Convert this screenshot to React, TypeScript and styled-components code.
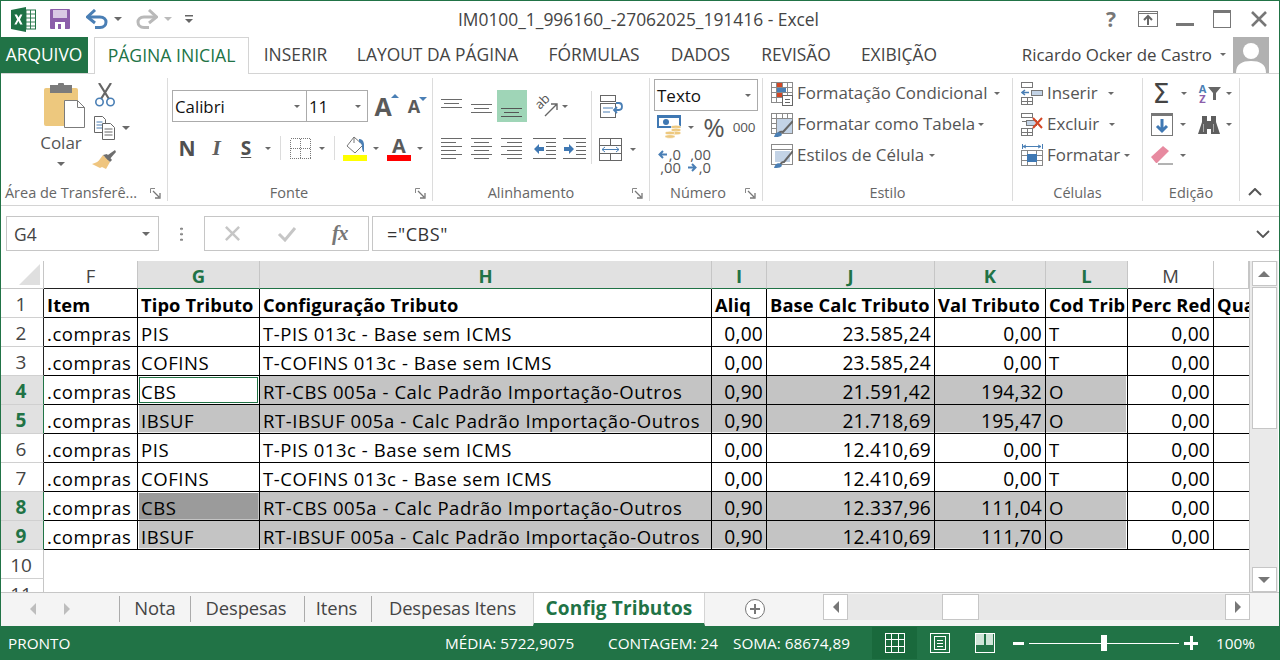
import React from "react";
import styled, { createGlobalStyle } from "styled-components";

const GREEN = "#217346";
const UI = '"Open Sans", "Noto Sans", sans-serif';

const Global = createGlobalStyle`
  html, body { margin: 0; padding: 0; background: #fff; }
  body { font-family: ${UI}; }
  * { box-sizing: border-box; }
`;

const Window = styled.div`
  width: 1280px; height: 660px; overflow: hidden; background: #fff;
  border: 1px solid ${GREEN}; border-bottom: 0;
  display: flex; flex-direction: column;
`;

const Caret = styled.span<{ $w?: number; $c?: string }>`
  display: inline-block; flex: none; width: 0; height: 0;
  border-left: ${p => (p.$w ?? 8) / 2}px solid transparent;
  border-right: ${p => (p.$w ?? 8) / 2}px solid transparent;
  border-top: ${p => (p.$w ?? 8) / 2}px solid ${p => p.$c ?? "#6a6a6a"};
`;

const Tool = styled.span<{ $w: number; $ml?: number; $h?: number; $bg?: string }>`
  display: inline-flex; align-items: center; justify-content: center; flex: none;
  width: ${p => p.$w}px; margin-left: ${p => p.$ml ?? 0}px;
  height: ${p => (p.$h ? `${p.$h}px` : "100%")};
  background: ${p => p.$bg ?? "transparent"};
`;

/* Title bar */
const TitleBar = styled.div`
  height: 36px; flex: none; display: flex; align-items: center; color: #444;
`;
const TitleText = styled.div`
  position: absolute; left: 0; width: 1275px; text-align: center; font-size: 17.4px; color: #444;
`;
const TitleWrap = styled.div`position: relative; display: flex; align-items: center; height: 36px; width: 1278px;`;

/* Tabs */
const TabsBar = styled.div`
  height: 37px; flex: none; display: flex; border-bottom: 1px solid #d4d4d4; position: relative;
`;
const FileTab = styled.div`
  width: 88px; height: 36px; margin-left: -1px; background: ${GREEN}; color: #fff; font-size: 17.4px; padding-bottom: 2px;
  display: flex; align-items: center; justify-content: center;
`;
const HomeTab = styled.div`
  width: 155px; height: 37px; margin-left: 6px; background: #fff; color: ${GREEN}; font-size: 17.6px; padding-bottom: 2px;
  border: 1px solid #d4d4d4; border-bottom: 0; display: flex; align-items: center; justify-content: center;
`;
const Tab = styled.div<{ $w: number }>`
  width: ${p => p.$w}px; height: 36px; color: #444; font-size: 17.4px; flex: none; padding-bottom: 2px;
  display: flex; align-items: center; justify-content: center;
`;
const UserName = styled.div`
  margin-left: auto; display: flex; align-items: center; height: 36px; font-size: 16.9px; color: #444; padding-bottom: 2px;
`;
const Avatar = styled.div`
  width: 36px; height: 36px; margin: 2px 10px 0 0; background: #b1b1b1; overflow: hidden; flex: none;
`;

/* Ribbon */
const Ribbon = styled.div`
  height: 132px; flex: none; display: flex; border-bottom: 1px solid #d4d4d4; padding-top: 4px;
`;
const Group = styled.div<{ $w: number }>`
  width: ${p => p.$w}px; height: 123px; flex: none; display: flex; flex-direction: column;
  border-right: 1px solid #dcdcdc;
`;
const GroupBody = styled.div<{ $pt?: number; $pl?: number }>`
  flex: 1; min-height: 0; padding-top: ${p => p.$pt ?? 0}px; padding-left: ${p => p.$pl ?? 0}px;
  display: flex; flex-direction: column;
`;
const GroupFoot = styled.div<{ $pr?: number }>`
  height: 26px; flex: none; display: flex; align-items: center; justify-content: center; position: relative;
  font-size: 14.5px; color: #666; padding-top: 8px; padding-right: ${p => p.$pr ?? 0}px; white-space: nowrap;
`;
const Launcher = styled.span`
  position: absolute; right: 6px; top: 13px; width: 11px; height: 11px; display: flex;
`;
const TRow = styled.div<{ $h: number; $mt?: number }>`
  display: flex; align-items: center; flex: none; height: ${p => p.$h}px; margin-top: ${p => p.$mt ?? 0}px;
`;
const Sep = styled.span<{ $ml?: number }>`
  width: 1px; height: 24px; background: #dcdcdc; flex: none; margin-left: ${p => p.$ml ?? 0}px;
`;

const Clip = styled.div`display: flex; height: 100%; padding-top: 5px;`;
const PasteCol = styled.div`
  width: 91px; padding-left: 43px; display: flex; flex-direction: column; align-items: flex-start;
`;
const PasteLabel = styled.div`
  width: 42px; margin-left: -4px; text-align: center; font-size: 17px; color: #555; line-height: 22px; margin-top: 3px;
`;
const PasteCaret = styled.div`width: 42px; margin-left: -4px; display: flex; justify-content: center; margin-top: 8px;`;
const ClipTools = styled.div`display: flex; flex-direction: column; gap: 0;`;

const Select = styled.div<{ $w: number; $ml?: number; $fs?: number }>`
  width: ${p => p.$w}px; height: 32px; margin-left: ${p => p.$ml ?? 0}px; flex: none;
  border: 1px solid #ababab; background: #fff; display: flex; align-items: center; justify-content: space-between;
  padding: 0 6px 0 2px; color: #111; font-size: ${p => p.$fs ?? 16.8}px;
`;
const GlyphN = styled.span`font: 700 21px "Open Sans", sans-serif; color: #505050;`;
const GlyphI = styled.span`font: italic 700 22px "Liberation Serif", serif; color: #606060;`;
const GlyphS = styled.span`font: 700 19px "Open Sans", sans-serif; color: #505050; text-decoration: underline; text-underline-offset: 2px;`;
const GrowA = styled.span<{ $fs: number; $tip: string; $down?: boolean }>`
  position: relative; font: 700 ${p => p.$fs}px "Open Sans", sans-serif; color: #5a5a5a; line-height: 1;
  &::after {
    content: ""; position: absolute; right: -7px; top: 0; width: 0; height: 0;
    border-left: 4px solid transparent; border-right: 4px solid transparent;
    ${p => (p.$down ? `border-top: 4px solid ${p.$tip};` : `border-bottom: 4px solid ${p.$tip};`)}
  }
`;
const ColorA = styled.span`
  display: flex; flex-direction: column; align-items: center; width: 24px; font: 700 20px/19px "Open Sans", sans-serif; color: #5a5a5a;
  &::after { content: ""; width: 24px; height: 6px; background: #ff0000; margin-top: 0; }
`;
const Thousands = styled.span`font-size: 13.5px; color: #555; letter-spacing: -.3px;`;
const Percent = styled.span`font-size: 26px; color: #555; line-height: 1;`;
const AlignWrap = styled.div`display: flex; height: 100%;`;
const AlignLeft = styled.div`width: 158px; padding-left: 4px; padding-top: 12px;`;
const VSep = styled.div`width: 1px; height: 73px; background: #dcdcdc; margin-top: 13px; flex: none;`;
const AlignRight = styled.div`padding-top: 12px; flex: 1;`;

const Action = styled.div<{ $mt?: number }>`
  display: flex; align-items: center; height: 31px; font-size: 16.9px; color: #555; white-space: nowrap;
  margin-top: ${p => p.$mt ?? 0}px; line-height: 1; padding-bottom: 0;
`;
const ActionText = styled.span``;
const ActionIcon = styled.span`width: 22px; height: 24px; margin-right: 4px; display: flex; flex: none;`;
const ActionCaret = styled.span<{ $ml: number }>`margin-left: ${p => p.$ml}px; display: flex;`;

const Collapse = styled.div`flex: 1; display: flex; align-items: flex-end; justify-content: center; padding: 0 10px 9px 0;`;

/* formula bar */
const FormulaBar = styled.div`height: 55px; flex: none; display: flex; align-items: flex-start; padding: 10px 0 0 5px; background: #fff;`;
const NameBox = styled.div`
  width: 155px; height: 35px; border: 1px solid #c6c6c6; display: flex; align-items: center; justify-content: space-between;
  padding: 0 8px 0 7px; font-size: 17.4px; color: #444;
`;
const Grip = styled.div`
  width: 3px; height: 15px; margin: 10px 21px 0 21px; flex: none;
  background-image: radial-gradient(circle, #8a8a8a 1.3px, transparent 1.4px); background-size: 3px 5.5px;
`;
const FxBox = styled.div`
  width: 165px; height: 35px; border: 1px solid #c6c6c6; display: flex; align-items: center; flex: none;
`;
const FxLabel = styled.span`
  font: italic 700 21px "Liberation Serif", serif; color: #777; margin-left: 35px; letter-spacing: -1px;
`;
const FormulaInput = styled.div`
  width: 907px; height: 35px; margin-left: 3px; border: 1px solid #c6c6c6; border-right: 0; display: flex; align-items: center; justify-content: space-between;
  padding: 0 9px 0 14px; font-size: 18px; color: #333; letter-spacing: .6px; flex: none;
`;

/* sheet */
const SheetArea = styled.div`height: 332px; flex: none; display: flex; border-bottom: 1px solid #c6c6c6;`;
const Grid = styled.div`
  width: 1248px; height: 331px; overflow: hidden; display: grid; flex: none; align-content: start;
  grid-template-columns: 43px 94px 122px 452px 55px 168px 111px 82px 86px 35px;
  grid-template-rows: 28px repeat(11, 29px);
  font-family: "Open Sans", sans-serif;
`;
const Corner = styled.div`
  background: #fff; border-bottom: 1px solid #c6c6c6; border-right: 1px solid #c6c6c6; position: relative;
  &::after {
    content: ""; position: absolute; right: 3px; bottom: 3px; width: 0; height: 0;
    border-left: 21px solid transparent; border-bottom: 21px solid #dfdfdf;
  }
`;
const ColHead = styled.div<{ $sel?: boolean; $line?: boolean }>`
  display: flex; align-items: center; justify-content: center; padding-top: 3px; line-height: 1;
  background: ${p => (p.$sel ? "#e1e1e1" : "#fff")};
  border-right: 1px solid #c6c6c6;
  border-bottom: 1px solid ${p => (p.$sel ? GREEN : p.$line ? "#222" : "#c6c6c6")};
  color: ${p => (p.$sel ? GREEN : "#444")}; font-weight: ${p => (p.$sel ? 700 : 400)}; font-size: 18.5px;
`;
const RowHead = styled.div<{ $sel?: boolean; $plain?: boolean }>`
  display: flex; align-items: center; justify-content: center; padding: 2px 2px 0 0;
  background: ${p => (p.$sel ? "#e1e1e1" : "#fff")};
  border-bottom: 1px solid #d0d0d0;
  border-right: 1px solid ${p => (p.$sel ? GREEN : p.$plain ? "#c6c6c6" : "#222")};
  color: ${p => (p.$sel ? GREEN : "#444")}; font-weight: ${p => (p.$sel ? 700 : 400)}; font-size: 19px;
`;
type Tone = "none" | "sel" | "dark" | "active";
const shade = (t: Tone) => (t === "sel" ? "#c4c4c4" : t === "dark" ? "#9b9b9b" : "#fff");
const Cell = styled.div<{ $tone: Tone; $right?: boolean; $bold?: boolean; $inset?: string; $open?: boolean }>`
  display: flex; align-items: center; overflow: hidden; white-space: nowrap;
  justify-content: ${p => (p.$right ? "flex-end" : "flex-start")};
  padding: 2px ${p => (p.$right ? 3 : 0)}px 0 ${p => (p.$right ? 0 : 3)}px;
  background: ${p => shade(p.$tone)};
  border-bottom: 1px solid #000; border-right: ${p => (p.$open ? "0" : "1px solid #000")};
  color: #000;
  font-size: ${p => (p.$bold ? 18.3 : p.$right ? 19.2 : 18.5)}px;
  letter-spacing: ${p => (p.$bold ? 0.12 : p.$right ? 0.2 : 0.55)}px;
  font-weight: ${p => (p.$bold ? 700 : 400)};
  box-shadow: ${p => p.$inset ?? "none"};
`;
const Empty = styled.div`grid-column: 2 / -1; background: #fff;`;

const VScroll = styled.div`
  width: 29px; flex: none; margin-left: 0; border-left: 1px solid #c6c6c6; background: #eaeaea; display: flex; flex-direction: column; align-items: center; padding: 0 0 0 0; height: 331px;
`;
const VBtn = styled.div`
  width: 25px; height: 25px; background: #fff; border: 1px solid #c6c6c6; display: flex; align-items: center; justify-content: center; flex: none;
`;
const VThumb = styled.div`width: 25px; height: 142px; margin-top: 1px; background: #fff; border: 1px solid #c6c6c6; flex: none;`;
const UpTri = styled.span`width: 0; height: 0; border-left: 6px solid transparent; border-right: 6px solid transparent; border-bottom: 6px solid #777;`;
const DownTri = styled.span`width: 0; height: 0; border-left: 6px solid transparent; border-right: 6px solid transparent; border-top: 6px solid #777;`;
const LeftTri = styled.span<{ $c?: string }>`width: 0; height: 0; border-top: 6px solid transparent; border-bottom: 6px solid transparent; border-right: 6px solid ${p => p.$c ?? "#777"};`;
const RightTri = styled.span<{ $c?: string }>`width: 0; height: 0; border-top: 6px solid transparent; border-bottom: 6px solid transparent; border-left: 6px solid ${p => p.$c ?? "#777"};`;

/* Sheet tabs */
const TabStrip = styled.div`height: 33px; flex: none; display: flex; background: #f4f4f4;`;
const StripNav = styled.div`width: 118px; display: flex; align-items: center; padding-left: 29px; gap: 28px; flex: none; padding-bottom: 2px;`;
const SheetTab = styled.div<{ $w: number; $pr?: number }>`
  width: ${p => p.$w}px; height: 26px; margin-top: 3px; flex: none; display: flex; align-items: center; justify-content: center;
  border-left: 1px solid #ababab; font-size: 18.4px; color: #444; padding: 0 ${p => p.$pr ?? 0}px 3px 0; letter-spacing: -.1px;
`;
const ActiveTab = styled.div`
  width: 172px; height: 33px; flex: none; background: #fff; display: flex; align-items: center; justify-content: center;
  border-bottom: 3px solid ${GREEN}; border-left: 1px solid #d4d4d4; border-right: 1px solid #d4d4d4;
  font-size: 19px; font-weight: 700; color: ${GREEN}; letter-spacing: .15px;
`;
const AddSheet = styled.div`
  width: 20px; height: 20px; margin: 6px 0 0 40px; border: 1px solid #777; border-radius: 50%; flex: none; position: relative; background: #fff;
  &::before { content: ""; position: absolute; left: 4px; right: 4px; top: 8px; height: 2px; background: #777; }
  &::after { content: ""; position: absolute; top: 4px; bottom: 4px; left: 8px; width: 2px; background: #777; }
`;
const HScroll = styled.div`
  width: 427px; height: 26px; margin: 1px 0 0 58px; flex: none; background: #e8e8e8; display: flex; align-items: stretch;
`;
const HBtn = styled.div`width: 25px; background: #fff; border: 1px solid #c6c6c6; display: flex; align-items: center; justify-content: center; flex: none;`;
const HThumb = styled.div`width: 37px; margin-left: 94px; background: #fff; border: 1px solid #c6c6c6; flex: none;`;
const HFill = styled.div`flex: 1;`;

/* Status */
const StatusBar = styled.div`
  height: 34px; flex: none; margin: 0 -1px; background: ${GREEN}; display: flex; align-items: center; color: #fff; font-size: 15.3px;
`;
const StatusItem = styled.span<{ $left: number; $w: number }>`
  margin-left: ${p => p.$left}px; width: ${p => p.$w}px; flex: none; white-space: nowrap;
`;
const ViewBtn = styled.div<{ $on?: boolean; $ml?: number }>`
  width: 45px; height: 32px; margin-left: ${p => p.$ml ?? 0}px; flex: none; display: flex; align-items: center; justify-content: center;
  background: ${p => (p.$on ? "#19693c" : "transparent")};
`;
const Slider = styled.div`
  width: 150px; height: 1px; margin-left: 5px; background: #fff; position: relative; flex: none;
  &::after { content: ""; position: absolute; left: 72px; top: -8px; width: 6px; height: 16px; background: #fff; }
`;
const ZoomSign = styled.span<{ $w: number; $ml: number }>`
  width: ${p => p.$w}px; height: 3px; margin-left: ${p => p.$ml}px; background: #fff; position: relative; flex: none;
`;
const ZoomPlus = styled(ZoomSign)`
  &::after { content: ""; position: absolute; left: ${p => p.$w / 2 - 1.5}px; top: -${p => p.$w / 2 - 1.5}px; width: 3px; height: ${p => p.$w}px; background: #fff; }
`;

const stroke = "#6a6a6a";
const blue = "#4a7fb5";

const Lines = ({ ys, spans, w = 22, h = 24, color = stroke }: { ys: number[]; spans: [number, number][]; w?: number; h?: number; color?: string }) => (
  <svg width={w} height={h} viewBox={`0 0 ${w} ${h}`} shapeRendering="crispEdges">
    {ys.map((y, i) => <line key={i} x1={spans[i % spans.length][0]} x2={spans[i % spans.length][1]} y1={y + .5} y2={y + .5} stroke={color} />)}
  </svg>
);

const LauncherIcon = () => (
  <svg width="11" height="11" viewBox="0 0 11 11">
    <path d="M.5 5V.5H5M.5.5" fill="none" stroke="#888" />
    <path d="M3 3l6 6M10 5v5H5" fill="none" stroke="#777" strokeWidth="1.3" />
  </svg>
);

const ExcelLogo = () => (
  <svg width="25" height="25" viewBox="0 0 25 25">
    <rect x="12" y="3" width="12.5" height="19" fill="#fff" stroke={GREEN} />
    <path d="M15 3v19M19.5 3v19M12 7h12M12 11h12M12 15h12M12 19h12" stroke={GREEN} strokeWidth=".9" />
    <path d="M0 3L15 0v25L0 22z" fill="#1e7145" />
    <path d="M3.5 7.5h2.4l1.6 3 1.7-3h2.2L9 12.5l2.6 5H9.2L7.4 14l-1.8 3.5H3.3L6.1 12.5z" fill="#fff" />
  </svg>
);
const SaveIcon = () => (
  <svg width="20" height="20" viewBox="0 0 20 20">
    <rect width="20" height="20" rx="1" fill="#8c5eaa" />
    <rect x="3" y="1" width="14" height="8" fill="#d9c8e4" />
    <rect x="5" y="13" width="10" height="7" fill="#fff" />
    <rect x="8" y="15" width="3" height="5" fill="#8c5eaa" />
  </svg>
);
const UndoIcon = ({ c, flip }: { c: string; flip?: boolean }) => (
  <svg width="22" height="20" viewBox="0 0 22 20" style={flip ? { transform: "scaleX(-1)" } : undefined}>
    <path d="M3 8h11c4 0 6 2.5 6 5s-2 5.5-6 5.5H9" fill="none" stroke={c} strokeWidth="3" />
    <path d="M9 1L1.5 8 9 14" fill="none" stroke={c} strokeWidth="3" />
  </svg>
);
const CustomizeIcon = () => (
  <svg width="8" height="9" viewBox="0 0 8 9"><rect width="8" height="1.5" fill="#666" /><path d="M0 4h8L4 8z" fill="#666" /></svg>
);
const HelpGlyph = styled.span`font: 700 21px "Open Sans", sans-serif; color: #777;`;

const PasteIcon = () => (
  <svg width="42" height="46" viewBox="0 0 42 46">
    <rect x="0" y="5" width="34" height="38" rx="2" fill="#edc87e" />
    <rect x="6" y="2" width="22" height="8" fill="#7b7b7b" />
    <rect x="14" y="0" width="6" height="4" rx="1" fill="#7b7b7b" />
    <path d="M20.5 17.5h13l7 7v20h-20z" fill="#fff" stroke="#7b7b7b" />
    <path d="M33.5 17.5v7h7" fill="none" stroke="#7b7b7b" />
  </svg>
);
const ScissorsIcon = () => (
  <svg width="22" height="24" viewBox="0 0 22 24">
    <path d="M5 0l10 16M17 0L7 16" stroke="#666" strokeWidth="2.2" fill="none" />
    <circle cx="5.5" cy="19" r="3.7" fill="none" stroke={blue} strokeWidth="1.6" />
    <circle cx="16.5" cy="19" r="3.7" fill="none" stroke={blue} strokeWidth="1.6" />
  </svg>
);
const CopyIcon = () => (
  <svg width="22" height="24" viewBox="0 0 22 24">
    <path d="M.5.5h8l3 3v13H.5z" fill="#fff" stroke="#666" />
    <path d="M2.5 6h6M2.5 9h6M2.5 12h6" stroke={blue} />
    <path d="M8.5 7.5h8l4 4v12h-12z" fill="#fff" stroke="#666" />
    <path d="M10.5 13h8M10.5 16h8M10.5 19h8" stroke="#666" />
  </svg>
);
const BrushIcon = () => (
  <svg width="24" height="22" viewBox="0 0 24 22">
    <path d="M13 7l10-7 1 2-8 9z" fill="#6e6e6e" />
    <path d="M11 5l7 7-4 7-4-2-2 1-8-4c4-1 7-3 8-5z" fill="#efc57f" />
    <path d="M11 5l4-1 5 6-2 2z" fill="#6e6e6e" />
  </svg>
);
const BordersIcon = () => (
  <svg width="21" height="21" viewBox="0 0 21 21">
    <path d="M.5.5h20v20H.5zM10.5.5v20M.5 10.5h20" fill="none" stroke="#777" strokeDasharray="1 1" shapeRendering="crispEdges" />
  </svg>
);
const FillIcon = () => (
  <svg width="24" height="25" viewBox="0 0 24 25">
    <path d="M11 1l9 8-8 8-8-7z" fill="#fff" stroke="#777" />
    <path d="M11 1v6" stroke="#777" />
    <path d="M16 3c3 0 5 2 5 6v7c-1 0-2-2-2-5s-1-4-3-5z" fill={blue} />
    <rect y="19" width="24" height="6" fill="#ffff00" />
  </svg>
);
const OrientIcon = () => (
  <svg width="24" height="24" viewBox="0 0 24 24">
    <text transform="translate(6 16) rotate(-45)" fontFamily="Open Sans" fontSize="13" fill="#555">ab</text>
    <path d="M11 22L23 10M17 10h6v6" fill="none" stroke="#666" strokeWidth="1.4" />
  </svg>
);
const WrapIcon = () => (
  <svg width="24" height="23" viewBox="0 0 24 23">
    <rect x=".5" y=".5" width="15" height="6" fill="#fff" stroke="#666" />
    <rect x=".5" y="8.5" width="15" height="14" fill="#fff" stroke="#666" />
    <path d="M3 13h10M3 17h7" stroke={blue} />
    <path d="M16 8h3c4 0 4 7 0 7h-4M17 12l-3 3 3 3" fill="none" stroke={blue} strokeWidth="1.8" />
  </svg>
);
const MergeIcon = () => (
  <svg width="23" height="23" viewBox="0 0 23 23" shapeRendering="crispEdges">
    <rect x=".5" y=".5" width="22" height="22" fill="#fff" stroke="#666" />
    <path d="M.5 7.5h22M.5 15.5h22M11.5.5v7M11.5 15.5v7" stroke="#666" />
    <path d="M3 11.5h17" stroke={blue} />
    <path d="M6 9l-3 2.5L6 14M17 9l3 2.5L17 14" fill="none" stroke={blue} shapeRendering="auto" />
  </svg>
);
const IndentIcon = ({ out }: { out?: boolean }) => (
  <svg width="23" height="22" viewBox="0 0 23 22" shapeRendering="crispEdges">
    {[1, 5, 9, 13, 17, 21].map((y, i) => <line key={y} x1={i === 0 || i === 5 ? 0 : 13} x2="23" y1={y - .5} y2={y - .5} stroke="#666" />)}
    <path d={out ? "M1 11l5-5v3h5v4H6v3z" : "M11 11L6 6v3H1v4h5v3z"} fill="#3f78b3" shapeRendering="auto" />
  </svg>
);
const CurrencyIcon = () => (
  <svg width="25" height="24" viewBox="0 0 25 24">
    <rect x="0" y="0" width="24" height="13" fill="#3f78b3" />
    <rect x="2" y="3" width="20" height="8" fill="#fff" />
    <circle cx="9" cy="7" r="3" fill="#3f78b3" />
    <ellipse cx="19" cy="12" rx="5" ry="1.8" fill="#edc87e" stroke="#fff" strokeWidth=".5" />
    <ellipse cx="19" cy="15" rx="5" ry="1.8" fill="#edc87e" stroke="#fff" strokeWidth=".5" />
    <ellipse cx="19" cy="18" rx="5" ry="1.8" fill="#edc87e" stroke="#fff" strokeWidth=".5" />
    <ellipse cx="13" cy="18" rx="5" ry="1.8" fill="#edc87e" stroke="#fff" strokeWidth=".5" />
    <ellipse cx="13" cy="21.5" rx="5" ry="1.8" fill="#edc87e" stroke="#fff" strokeWidth=".5" />
  </svg>
);
const Decimal = styled.span`display: grid; grid-template-columns: 9px 14px; font-size: 14.8px; line-height: 13px; color: #555; width: 23px; text-align: right;`;
const DecimalCell = styled.span<{ $wide?: boolean }>`grid-column: ${p => (p.$wide ? "1 / -1" : "auto")}; display: flex; align-items: center; justify-content: flex-end;`;
const ArrowL = () => <svg width="9" height="9" viewBox="0 0 9 9"><path d="M9 4.5H2M5 1L1.5 4.5 5 8" fill="none" stroke={blue} strokeWidth="2" /></svg>;
const ArrowR = () => <svg width="9" height="9" viewBox="0 0 9 9"><path d="M0 4.5h7M4 1l3.5 3.5L4 8" fill="none" stroke={blue} strokeWidth="2" /></svg>;

const GridBase = ({ children }: { children?: React.ReactNode }) => (
  <svg width="22" height="24" viewBox="0 0 22 24" shapeRendering="crispEdges">
    <path d="M.5.5h21v20H.5zM.5 5.5h21M.5 10.5h21M.5 15.5h21M5.5.5v20M11.5.5v20M16.5.5v20" fill="#fff" stroke="#8a8a8a" />
    {children}
  </svg>
);
const CondIcon = () => <GridBase>
  <rect x="6" y="1" width="5" height="4" fill="#d24726" /><rect x="6" y="6" width="9" height="4" fill={blue} /><rect x="6" y="11" width="5" height="4" fill="#d24726" />
  <rect x="11.5" y="13.5" width="10" height="10" fill="#fff" stroke="#666" /><path d="M14 17h5M14 20h5" stroke="#666" />
</GridBase>;
const TableIcon = () => <GridBase>
  <rect x="6" y="6" width="15" height="14" fill="#c3d3e6" />
  <path d="M6 24c1-4 3-6 6-5l10-11" fill="none" stroke="#666" strokeWidth="2" shapeRendering="auto" />
  <path d="M3 24c1-4 4-6 7-4l1 2c-2 2-5 2-8 2z" fill={blue} shapeRendering="auto" />
</GridBase>;
const CellStyleIcon = () => (
  <svg width="22" height="24" viewBox="0 0 22 24">
    <path d="M.5.5h21v20H.5zM.5 5.5h21" fill="#fff" stroke="#8a8a8a" shapeRendering="crispEdges" />
    <rect x="4" y="7" width="15" height="11" fill="#c3d3e6" />
    <path d="M8 23c1-3 3-5 5-5l9-11" fill="none" stroke="#666" strokeWidth="2" />
    <path d="M3 24c1-4 4-6 7-4l1 2c-2 2-5 2-8 2z" fill={blue} />
  </svg>
);
const InsertIcon = () => (
  <svg width="22" height="24" viewBox="0 0 22 24" shapeRendering="crispEdges">
    <path d="M.5.5h11v5H.5zM.5 15.5h11v7H.5zM6.5 15.5v7M.5 19.5h11" fill="#fff" stroke="#777" />
    <rect x="10" y="8" width="11" height="5" fill="#c3d3e6" stroke="#777" />
    <path d="M8 10.5H1M4 8l-3 2.5L4 13" fill="none" stroke={blue} strokeWidth="1.5" shapeRendering="auto" />
  </svg>
);
const DeleteIcon = () => (
  <svg width="22" height="24" viewBox="0 0 22 24" shapeRendering="crispEdges">
    <path d="M.5.5h11v4H.5zM.5 15.5h11v7H.5zM6.5 15.5v7M.5 19.5h11M.5 8.5h6" fill="#fff" stroke="#777" />
    <rect x="5" y="7" width="10" height="5" fill="#c3d3e6" stroke="#777" />
    <path d="M12 5l9 10M21 5l-9 10" stroke="#d24726" strokeWidth="2" shapeRendering="auto" />
  </svg>
);
const FormatIcon = () => (
  <svg width="22" height="24" viewBox="0 0 22 24" shapeRendering="crispEdges">
    <path d="M1 0v5M21 0v5" stroke={blue} />
    <path d="M2 2.5h18M5 1l-3 1.5L5 4M17 1l3 1.5L17 4" fill="none" stroke={blue} shapeRendering="auto" />
    <path d="M.5 6.5h21v15H.5zM6.5 6.5v15M15.5 6.5v15M.5 11.5h21M.5 16.5h21" fill="#fff" stroke="#888" />
    <rect x="6" y="10" width="10" height="8" fill="#3f78b3" />
  </svg>
);
const SortDown = () => (
  <svg width="22" height="23" viewBox="0 0 22 23">
    <rect x=".5" y=".5" width="21" height="22" fill="#fff" stroke="#777" />
    <rect width="22" height="3" fill="#777" />
    <path d="M11 6v12M6 13l5 5 5-5" fill="none" stroke="#3f78b3" strokeWidth="3" />
  </svg>
);
const Binoculars = () => (
  <svg width="22" height="22" viewBox="0 0 22 22">
    <path d="M4 2h5v5h4V2h5v6l4 12H13v-5H9v5H0L4 8z" fill="#5e5e5e" />
    <path d="M5.5 10v8M15.5 10v8" stroke="#aaa" />
  </svg>
);
const Eraser = () => (
  <svg width="22" height="20" viewBox="0 0 22 20">
    <path d="M0 11L12 0l6 5-12 12H5z" fill="#e78aa0" />
    <path d="M7 18h15" stroke="#666" />
  </svg>
);
const SortFilter = styled.span`display: inline-flex; align-items: center; gap: 0;`;
const AZ = styled.span`display: flex; flex-direction: column; font: 700 11px/10px "Open Sans", sans-serif; color: ${blue}; width: 10px; text-align: center;`;
const Zed = styled.span`color: #8c5eaa;`;
const Funnel = () => <svg width="13" height="13" viewBox="0 0 13 13"><path d="M0 0h13L8 6v7H5V6z" fill="#666" /></svg>;
const Sigma = styled.span`font: 400 27px/1 "DejaVu Sans", sans-serif; color: #444;`;

const XIcon = ({ c = "#777", s = 18, w = 2.6 }: { c?: string; s?: number; w?: number }) => (
  <svg width={s} height={s} viewBox="0 0 18 18"><path d="M2 2l14 14M16 2L2 16" stroke={c} strokeWidth={w} /></svg>
);
const CheckIcon = () => <svg width="20" height="16" viewBox="0 0 20 16"><path d="M2 8l6 6L18 2" fill="none" stroke="#c6c6c6" strokeWidth="3" /></svg>;

type Row = { n: number; head?: boolean; f: string; g: string; h: string; i: string; j: string; k: string; l: string; m: string; o?: string };
const rows: Row[] = [
  { n: 1, head: true, f: "Item", g: "Tipo Tributo", h: "Configuração Tributo", i: "Aliq", j: "Base Calc Tributo", k: "Val Tributo", l: "Cod Trib", m: "Perc Red", o: "Qua" },
  { n: 2, f: ".compras", g: "PIS", h: "T-PIS 013c - Base sem ICMS", i: "0,00", j: "23.585,24", k: "0,00", l: "T", m: "0,00" },
  { n: 3, f: ".compras", g: "COFINS", h: "T-COFINS 013c - Base sem ICMS", i: "0,00", j: "23.585,24", k: "0,00", l: "T", m: "0,00" },
  { n: 4, f: ".compras", g: "CBS", h: "RT-CBS 005a - Calc Padrão Importação-Outros", i: "0,90", j: "21.591,42", k: "194,32", l: "O", m: "0,00" },
  { n: 5, f: ".compras", g: "IBSUF", h: "RT-IBSUF 005a - Calc Padrão Importação-Outros", i: "0,90", j: "21.718,69", k: "195,47", l: "O", m: "0,00" },
  { n: 6, f: ".compras", g: "PIS", h: "T-PIS 013c - Base sem ICMS", i: "0,00", j: "12.410,69", k: "0,00", l: "T", m: "0,00" },
  { n: 7, f: ".compras", g: "COFINS", h: "T-COFINS 013c - Base sem ICMS", i: "0,00", j: "12.410,69", k: "0,00", l: "T", m: "0,00" },
  { n: 8, f: ".compras", g: "CBS", h: "RT-CBS 005a - Calc Padrão Importação-Outros", i: "0,90", j: "12.337,96", k: "111,04", l: "O", m: "0,00" },
  { n: 9, f: ".compras", g: "IBSUF", h: "RT-IBSUF 005a - Calc Padrão Importação-Outros", i: "0,90", j: "12.410,69", k: "111,70", l: "O", m: "0,00" },
];
const selectedRows = [4, 5, 8, 9];

const inset = (n: number, col: "g" | "l" | "mid") => {
  const parts: string[] = [];
  if (col === "g") parts.push("inset 1px 0 0 #fff");
  if (col === "l") parts.push("inset -1px 0 0 #fff");
  if (n === 5 || n === 9) parts.push("inset 0 -1px 0 #eee");
  return parts.length ? parts.join(",") : undefined;
};

const SheetRow = ({ r }: { r: Row }) => {
  const sel = selectedRows.includes(r.n);
  const tone: Tone = sel ? "sel" : "none";
  const gTone: Tone = r.n === 8 ? "dark" : r.n === 4 ? "active" : tone;
  const gInset =
    r.n === 4 ? "inset 0 0 0 1px #fff, inset 0 0 0 2px #217346"
    : r.n === 8 ? "inset 1px 1px 0 #fff, inset -1px -1px 0 #c4c4c4"
    : inset(r.n, sel ? "g" : "mid");
  const b = r.head;
  return (
    <>
      <RowHead $sel={sel}>{r.n}</RowHead>
      <Cell $tone="none" $bold={b}>{r.f}</Cell>
      <Cell $tone={gTone} $bold={b} $inset={gInset}>{r.g}</Cell>
      <Cell $tone={tone} $bold={b} $inset={sel ? inset(r.n, "mid") : undefined}>{r.h}</Cell>
      <Cell $tone={tone} $bold={b} $right={!b} $inset={sel ? inset(r.n, "mid") : undefined}>{r.i}</Cell>
      <Cell $tone={tone} $bold={b} $right={!b} $inset={sel ? inset(r.n, "mid") : undefined}>{r.j}</Cell>
      <Cell $tone={tone} $bold={b} $right={!b} $inset={sel ? inset(r.n, "mid") : undefined}>{r.k}</Cell>
      <Cell $tone={tone} $bold={b} $inset={sel ? inset(r.n, "l") : undefined}>{r.l}</Cell>
      <Cell $tone="none" $bold={b} $right={!b}>{r.m}</Cell>
      <Cell $tone="none" $bold={b} $open>{r.o ?? ""}</Cell>
    </>
  );
};

export default function App() {
  return (
    <Window>
      <Global />
      <TitleBar>
        <TitleWrap>
          <TitleText>IM0100_1_996160_-27062025_191416 - Excel</TitleText>
          <Tool $w={25} $ml={10}><ExcelLogo /></Tool>
          <Tool $w={20} $ml={14}><SaveIcon /></Tool>
          <Tool $w={22} $ml={16}><UndoIcon c="#4a7fb5" /></Tool>
          <Tool $w={8} $ml={6}><Caret $w={8} /></Tool>
          <Tool $w={22} $ml={14}><UndoIcon c="#b9b9b9" flip /></Tool>
          <Tool $w={8} $ml={6}><Caret $w={8} $c="#bbb" /></Tool>
          <Tool $w={8} $ml={13}><CustomizeIcon /></Tool>
          <Tool $w={14} $ml={911}><HelpGlyph>?</HelpGlyph></Tool>
          <Tool $w={20} $ml={20}>
            <svg width="20" height="16" viewBox="0 0 20 16"><rect x=".5" y=".5" width="19" height="15" fill="none" stroke="#777" /><path d="M0 2.5h20" stroke="#777" /><path d="M10 14V6M6 9l4-4 4 4" fill="none" stroke="#666" strokeWidth="2" /></svg>
          </Tool>
          <Tool $w={18} $ml={18}><svg width="18" height="18" viewBox="0 0 18 18"><rect y="13" width="18" height="3" fill="#777" /></svg></Tool>
          <Tool $w={18} $ml={19}><svg width="18" height="18" viewBox="0 0 18 18"><rect x=".5" y=".5" width="17" height="17" fill="none" stroke="#777" /><rect width="18" height="3" fill="#777" /></svg></Tool>
          <Tool $w={18} $ml={19}><XIcon /></Tool>
        </TitleWrap>
      </TitleBar>

      <TabsBar>
        <FileTab>ARQUIVO</FileTab>
        <HomeTab>PÁGINA INICIAL</HomeTab>
        <Tab $w={93}>INSERIR</Tab>
        <Tab $w={191}>LAYOUT DA PÁGINA</Tab>
        <Tab $w={122}>FÓRMULAS</Tab>
        <Tab $w={91}>DADOS</Tab>
        <Tab $w={100}>REVISÃO</Tab>
        <Tab $w={106}>EXIBIÇÃO</Tab>
        <UserName>
          Ricardo Ocker de Castro
          <Tool $w={21} $h={30}><Caret $w={7} /></Tool>
          <Avatar>
            <svg width="36" height="36" viewBox="0 0 36 36">
              <circle cx="18" cy="14" r="8" fill="#fff" />
              <path d="M3 36c0-9 6-12 15-12s15 3 15 12z" fill="#fff" />
            </svg>
          </Avatar>
        </UserName>
      </TabsBar>

      <Ribbon>
        <Group $w={167}>
          <GroupBody>
            <Clip>
              <PasteCol>
                <PasteIcon />
                <PasteLabel>Colar</PasteLabel>
                <PasteCaret><Caret $w={8} /></PasteCaret>
              </PasteCol>
              <ClipTools>
                <TRow $h={24}><Tool $w={22} $ml={2}><ScissorsIcon /></Tool></TRow>
                <TRow $h={24} $mt={9}><Tool $w={22} $ml={2}><CopyIcon /></Tool><Tool $w={8} $ml={6}><Caret $w={8} /></Tool></TRow>
                <TRow $h={22} $mt={10}><Tool $w={24}><BrushIcon /></Tool></TRow>
              </ClipTools>
            </Clip>
          </GroupBody>
          <GroupFoot $pr={26}>Área de Transferê...<Launcher><LauncherIcon /></Launcher></GroupFoot>
        </Group>

        <Group $w={265}>
          <GroupBody $pt={12} $pl={4}>
            <TRow $h={32}>
              <Select $w={135}>Calibri<Caret $w={7} /></Select>
              <Select $w={62} $ml={-1}>11<Caret $w={7} /></Select>
              <Tool $w={20} $ml={5}><GrowA $fs={25} $tip="#4a7fb5">A</GrowA></Tool>
              <Tool $w={20} $ml={11}><GrowA $fs={18} $tip="#4a7fb5" $down>A</GrowA></Tool>
            </TRow>
            <TRow $h={28} $mt={12}>
              <Tool $w={30}><GlyphN>N</GlyphN></Tool>
              <Tool $w={29}><GlyphI>I</GlyphI></Tool>
              <Tool $w={30}><GlyphS>S</GlyphS></Tool>
              <Tool $w={14}><Caret $w={7} /></Tool>
              <Sep $ml={5} />
              <Tool $w={21} $ml={9}><BordersIcon /></Tool>
              <Tool $w={14} $ml={4}><Caret $w={7} /></Tool>
              <Sep $ml={5} />
              <Tool $w={24} $ml={8}><FillIcon /></Tool>
              <Tool $w={14} $ml={2}><Caret $w={7} /></Tool>
              <Tool $w={24} $ml={4}><ColorA>A</ColorA></Tool>
              <Tool $w={14} $ml={2}><Caret $w={7} /></Tool>
            </TRow>
          </GroupBody>
          <GroupFoot $pr={22}>Fonte<Launcher><LauncherIcon /></Launcher></GroupFoot>
        </Group>

        <Group $w={217}>
          <GroupBody>
            <AlignWrap>
              <AlignLeft>
                <TRow $h={32}>
                  <Tool $w={30}><Lines ys={[5, 9, 13]} spans={[[0, 21], [3, 18], [0, 21]]} /></Tool>
                  <Tool $w={30}><Lines ys={[10, 14, 18]} spans={[[0, 21], [3, 18], [0, 21]]} /></Tool>
                  <Tool $w={30} $bg="#9fd5b7"><Lines ys={[14, 18, 22]} spans={[[0, 21], [3, 18], [0, 21]]} color="#555" /></Tool>
                  <Tool $w={30} $ml={4}><OrientIcon /></Tool>
                  <Tool $w={8}><Caret $w={7} /></Tool>
                </TRow>
                <TRow $h={28} $mt={13}>
                  <Tool $w={30}><Lines ys={[1, 5, 9, 13, 17, 21]} spans={[[0, 21], [0, 15]]} /></Tool>
                  <Tool $w={30}><Lines ys={[1, 5, 9, 13, 17, 21]} spans={[[0, 21], [3, 18]]} /></Tool>
                  <Tool $w={30}><Lines ys={[1, 5, 9, 13, 17, 21]} spans={[[0, 21], [6, 21]]} /></Tool>
                  <Tool $w={23} $ml={6}><IndentIcon out /></Tool>
                  <Tool $w={23} $ml={7}><IndentIcon /></Tool>
                </TRow>
              </AlignLeft>
              <VSep />
              <AlignRight>
                <TRow $h={32}><Tool $w={24} $ml={8}><WrapIcon /></Tool></TRow>
                <TRow $h={28} $mt={13}>
                  <Tool $w={23} $ml={7}><MergeIcon /></Tool>
                  <Tool $w={8} $ml={7}><Caret $w={7} /></Tool>
                </TRow>
              </AlignRight>
            </AlignWrap>
          </GroupBody>
          <GroupFoot $pr={20}>Alinhamento<Launcher><LauncherIcon /></Launcher></GroupFoot>
        </Group>

        <Group $w={113}>
          <GroupBody $pt={1} $pl={4}>
            <TRow $h={32}><Select $w={104} $fs={17}>Texto<Caret $w={7} /></Select></TRow>
            <TRow $h={26} $mt={3}>
              <Tool $w={25} $ml={3}><CurrencyIcon /></Tool>
              <Tool $w={8} $ml={5}><Caret $w={7} /></Tool>
              <Tool $w={24} $ml={7}><Percent>%</Percent></Tool>
              <Tool $w={24} $ml={6}><Thousands>000</Thousands></Tool>
            </TRow>
            <TRow $h={28} $mt={7}>
              <Tool $w={23} $ml={4}>
                <Decimal><DecimalCell><ArrowL /></DecimalCell><DecimalCell>,0</DecimalCell><DecimalCell $wide>,00</DecimalCell></Decimal>
              </Tool>
              <Tool $w={23} $ml={7}>
                <Decimal><DecimalCell $wide>,00</DecimalCell><DecimalCell><ArrowR /></DecimalCell><DecimalCell>,0</DecimalCell></Decimal>
              </Tool>
            </TRow>
          </GroupBody>
          <GroupFoot $pr={16}>Número<Launcher><LauncherIcon /></Launcher></GroupFoot>
        </Group>

        <Group $w={250}>
          <GroupBody $pt={0} $pl={8}>
            <Action><ActionIcon><CondIcon /></ActionIcon><ActionText>Formatação Condicional</ActionText><ActionCaret $ml={6}><Caret $w={7} /></ActionCaret></Action>
            <Action><ActionIcon><TableIcon /></ActionIcon><ActionText>Formatar como Tabela</ActionText><ActionCaret $ml={3}><Caret $w={7} /></ActionCaret></Action>
            <Action><ActionIcon><CellStyleIcon /></ActionIcon><ActionText>Estilos de Célula</ActionText><ActionCaret $ml={5}><Caret $w={7} /></ActionCaret></Action>
          </GroupBody>
          <GroupFoot>Estilo</GroupFoot>
        </Group>

        <Group $w={130}>
          <GroupBody $pl={8}>
            <Action><ActionIcon><InsertIcon /></ActionIcon><ActionText>Inserir</ActionText><ActionCaret $ml={10}><Caret $w={7} /></ActionCaret></Action>
            <Action><ActionIcon><DeleteIcon /></ActionIcon><ActionText>Excluir</ActionText><ActionCaret $ml={10}><Caret $w={7} /></ActionCaret></Action>
            <Action><ActionIcon><FormatIcon /></ActionIcon><ActionText>Formatar</ActionText><ActionCaret $ml={4}><Caret $w={7} /></ActionCaret></Action>
          </GroupBody>
          <GroupFoot>Células</GroupFoot>
        </Group>

        <Group $w={97}>
          <GroupBody $pl={8}>
            <TRow $h={31}>
              <Tool $w={20}><Sigma>Σ</Sigma></Tool>
              <Tool $w={8} $ml={9}><Caret $w={7} /></Tool>
              <Tool $w={24} $ml={9}><SortFilter><AZ>A<Zed>Z</Zed></AZ><Funnel /></SortFilter></Tool>
              <Tool $w={8} $ml={4}><Caret $w={7} /></Tool>
            </TRow>
            <TRow $h={31}>
              <Tool $w={22}><SortDown /></Tool>
              <Tool $w={8} $ml={6}><Caret $w={7} /></Tool>
              <Tool $w={22} $ml={11}><Binoculars /></Tool>
              <Tool $w={8} $ml={5}><Caret $w={7} /></Tool>
            </TRow>
            <TRow $h={31}>
              <Tool $w={22}><Eraser /></Tool>
              <Tool $w={8} $ml={6}><Caret $w={7} /></Tool>
            </TRow>
          </GroupBody>
          <GroupFoot>Edição</GroupFoot>
        </Group>

        <Collapse>
          <svg width="14" height="8" viewBox="0 0 14 8"><path d="M1 7l6-6 6 6" fill="none" stroke="#555" strokeWidth="2" /></svg>
        </Collapse>
      </Ribbon>

      <FormulaBar>
        <NameBox>G4<Caret $w={8} /></NameBox>
        <Grip />
        <FxBox>
          <Tool $w={18} $ml={18}><XIcon c="#c6c6c6" s={17} w={2.6} /></Tool>
          <Tool $w={20} $ml={36}><CheckIcon /></Tool>
          <FxLabel>fx</FxLabel>
        </FxBox>
        <FormulaInput>
          ="CBS"
          <svg width="14" height="8" viewBox="0 0 14 8"><path d="M1 1l6 6 6-6" fill="none" stroke="#555" strokeWidth="1.8" /></svg>
        </FormulaInput>
      </FormulaBar>

      <SheetArea>
        <Grid>
          <Corner />
          <ColHead $line>F</ColHead>
          <ColHead $sel>G</ColHead>
          <ColHead $sel>H</ColHead>
          <ColHead $sel>I</ColHead>
          <ColHead $sel>J</ColHead>
          <ColHead $sel>K</ColHead>
          <ColHead $sel>L</ColHead>
          <ColHead $line>M</ColHead>
          <ColHead />
          {rows.map(r => <SheetRow key={r.n} r={r} />)}
          <RowHead $plain>10</RowHead><Empty />
          <RowHead $plain>11</RowHead><Empty />
        </Grid>
        <VScroll>
          <VBtn><UpTri /></VBtn>
          <VThumb />
          <HFill />
          <VBtn><DownTri /></VBtn>
        </VScroll>
      </SheetArea>

      <TabStrip>
        <StripNav><LeftTri $c="#bdbdbd" /><RightTri $c="#bdbdbd" /></StripNav>
        <SheetTab $w={71}>Nota</SheetTab>
        <SheetTab $w={114} $pr={3}>Despesas</SheetTab>
        <SheetTab $w={67} $pr={3}>Itens</SheetTab>
        <SheetTab $w={162}>Despesas Itens</SheetTab>
        <ActiveTab>Config Tributos</ActiveTab>
        <AddSheet />
        <HScroll>
          <HBtn><LeftTri /></HBtn>
          <HThumb />
          <HFill />
          <HBtn><RightTri /></HBtn>
        </HScroll>
      </TabStrip>

      <StatusBar>
        <StatusItem $left={8} $w={62}>PRONTO</StatusItem>
        <StatusItem $left={375} $w={130}>MÉDIA: 5722,9075</StatusItem>
        <StatusItem $left={33} $w={110}>CONTAGEM: 24</StatusItem>
        <StatusItem $left={15} $w={118}>SOMA: 68674,89</StatusItem>
        <ViewBtn $on $ml={21}>
          <svg width="20" height="20" viewBox="0 0 20 20" shapeRendering="crispEdges"><path d="M.5.5h19v19H.5zM6.5.5v19M13.5.5v19M.5 6.5h19M.5 13.5h19" fill="none" stroke="#fff" /></svg>
        </ViewBtn>
        <ViewBtn>
          <svg width="20" height="20" viewBox="0 0 20 20" shapeRendering="crispEdges"><path d="M.5.5h19v19H.5zM4.5 3.5h11v13h-11zM7 7.5h6M7 10.5h6M7 13.5h6" fill="none" stroke="#fff" /></svg>
        </ViewBtn>
        <ViewBtn>
          <svg width="20" height="20" viewBox="0 0 20 20" shapeRendering="crispEdges"><path d="M.5.5h19v19H.5z" fill="none" stroke="#fff" /><rect x="1" y="1" width="8" height="11" fill="#cfe5d8" /><rect x="11" y="1" width="7" height="11" fill="#cfe5d8" /></svg>
        </ViewBtn>
        <ZoomSign $w={11} $ml={6} />
        <Slider />
        <ZoomPlus $w={14} $ml={5} />
        <StatusItem $left={18} $w={46}>100%</StatusItem>
      </StatusBar>
    </Window>
  );
}
